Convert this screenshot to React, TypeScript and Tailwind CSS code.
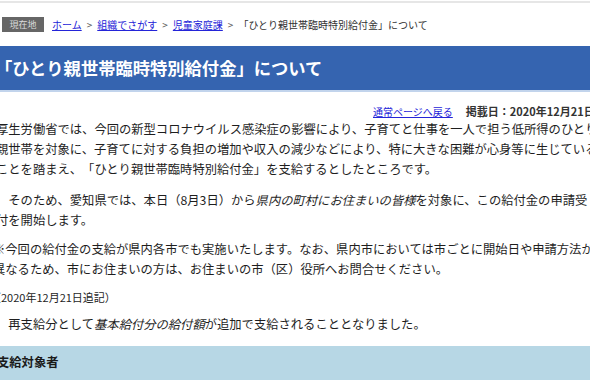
import React from 'react';

const Sep = () => <span className="px-[5px] text-[#555]">&gt;</span>;

const Line = ({ children }: { children: React.ReactNode }) => (
  <div className="whitespace-nowrap">{children}</div>
);

const IDSP = '\u3000';

const App = () => {
  return (
    <div className="w-[590px] h-[380px] overflow-hidden bg-white text-[#1e1e1e] font-['Noto_Sans_CJK_JP','Noto_Sans',sans-serif]">
      {/* top rule */}
      <div className="mt-px h-[2px] bg-[#e6e6e6]" />

      {/* breadcrumb */}
      <nav className="mt-[14px] flex h-[15px] items-center whitespace-nowrap text-[10px] leading-none">
        <span className="ml-[2px] flex h-[15px] w-[42px] items-center justify-center bg-[#666] text-[9px] text-[#dcdcdc]">
          現在地
        </span>
        <a className="ml-[8px] text-[#2424d8] underline">ホーム</a>
        <Sep />
        <a className="text-[#2424d8] underline">組織でさがす</a>
        <Sep />
        <a className="text-[#2424d8] underline">児童家庭課</a>
        <Sep />
        <span className="text-[#333]">「ひとり親世帯臨時特別給付金」について</span>
      </nav>

      {/* page title */}
      <h1 className="mt-[14px] flex h-[46px] items-center border-b-2 border-[#c2d4ec] bg-[#3564b0]">
        <span className="-ml-[5px] whitespace-nowrap text-[17.3px] font-bold text-white">
          「ひとり親世帯臨時特別給付金」について
        </span>
      </h1>

      {/* date row */}
      <div className="mt-[11px] flex h-[16px] items-center whitespace-nowrap pl-[373px]">
        <a className="text-[10px] text-[#2424d8] underline">通常ページへ戻る</a>
        <span className="ml-[13px] text-[11px] font-semibold text-[#333]">掲載日：2020年12月21日更新</span>
      </div>

      {/* body */}
      <div className="-ml-[4px] w-[620px] text-[12.3px] leading-[20px] [text-spacing-trim:space-all]">
        <div>
          <Line>厚生労働省では、今回の新型コロナウイルス感染症の影響により、子育てと仕事を一人で担う低所得のひとり</Line>
          <Line>親世帯を対象に、子育てに対する負担の増加や収入の減少などにより、特に大きな困難が心身等に生じている</Line>
          <Line>ことを踏まえ、「ひとり親世帯臨時特別給付金」を支給するとしたところです。</Line>
        </div>

        <div className="mt-[11px]">
          <Line>
            {IDSP}そのため、愛知県では、本日（8月3日）から<em className="italic">県内の町村にお住まいの皆様</em>を対象に、この給付金の申請受
          </Line>
          <Line>付を開始します。</Line>
        </div>

        <div className="mt-[9px] -ml-[3px]">
          <Line>※今回の給付金の支給が県内各市でも実施いたします。なお、県内市においては市ごとに開始日や申請方法が</Line>
          <Line>異なるため、市にお住まいの方は、お住まいの市（区）役所へお問合せください。</Line>
        </div>

        <div className="mt-[10px] -ml-[6px] text-[11px] leading-[16px]">
          <Line>（2020年12月21日追記）</Line>
        </div>

        <div className="mt-[9px]">
          <Line>
            {IDSP}再支給分として<em className="italic">基本給付分の給付額</em>が追加で支給されることとなりました。
          </Line>
        </div>
      </div>

      {/* section heading */}
      <h2 className="mt-[12px] h-[40px] bg-[#b7d7e5] pt-[6px]">
        <span className="-ml-[3px] block text-[12.3px] font-bold leading-[20px] text-[#1a1a1a]">支給対象者</span>
      </h2>
    </div>
  );
};

export default App;
